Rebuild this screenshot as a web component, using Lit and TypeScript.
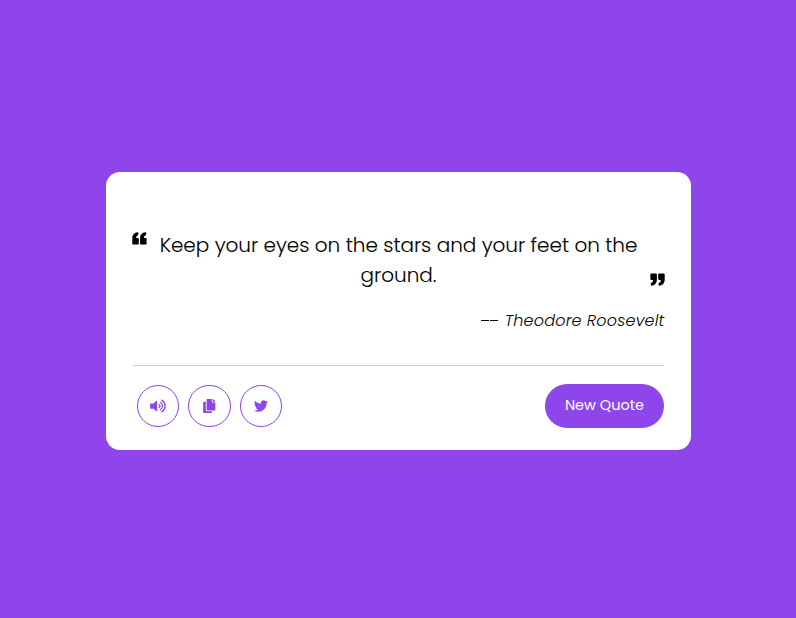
import { LitElement, html, css, svg } from "lit";
import { customElement } from "lit/decorators.js";

const quoteMark = svg`<path d="M5.6 .3Q6.4 .2 6.4 .9V2.6Q6.4 3.1 5.9 3.2C4.8 3.5 4.2 4.4 4.2 6H5.9Q6.8 6 6.8 6.9V11.7Q6.8 12.6 5.9 12.6H1.2Q.3 12.6 .3 11.7V6.4C.3 3 2.2 .6 5.6 .3ZM13.4 .3Q14.2 .2 14.2 .9V2.6Q14.2 3.1 13.7 3.2C12.6 3.5 12 4.4 12 6H13.7Q14.6 6 14.6 6.9V11.7Q14.6 12.6 13.7 12.6H9Q8.1 12.6 8.1 11.7V6.4C8.1 3 10 .6 13.4 .3Z"/>`;
const volume = svg`<path d="M215.03 71.05L126.06 160H24c-13.26 0-24 10.74-24 24v144c0 13.25 10.74 24 24 24h102.06l88.97 88.95c15.03 15.03 40.97 4.47 40.97-16.97V88.02c0-21.46-25.96-31.98-40.97-16.97z"/><path fill="none" stroke="currentColor" stroke-width="46" stroke-linecap="round" d="M328 201a63 63 0 0 1 0 110M378 121a160 160 0 0 1 0 270M429 41a256 256 0 0 1 0 430"/>`;
const copy = svg`<path d="M320 448v40c0 13.255-10.745 24-24 24H24c-13.255 0-24-10.745-24-24V120c0-13.255 10.745-24 24-24h72v296c0 30.879 25.121 56 56 56h168zm0-344V0H152c-13.255 0-24 10.745-24 24v368c0 13.255 10.745 24 24 24h272c13.255 0 24-10.745 24-24V128H344c-13.2 0-24-10.8-24-24zm120.971-31.029L375.029 7.029A24 24 0 0 0 358.059 0H352v96h96v-6.059a24 24 0 0 0-7.029-16.97z"/>`;
const twitter = svg`<path d="M459.37 151.716c.325 4.548.325 9.097.325 13.645 0 138.72-105.583 298.558-298.558 298.558-59.452 0-114.68-17.219-161.137-47.106 8.447.974 16.568 1.299 25.34 1.299 49.055 0 94.213-16.568 130.274-44.832-46.132-.975-84.792-31.188-98.112-72.772 6.498.974 12.995 1.624 19.818 1.624 9.421 0 18.843-1.3 27.614-3.573-48.081-9.747-84.143-51.98-84.143-102.985v-1.299c13.969 7.797 30.214 12.67 47.431 13.319-28.264-18.843-46.781-51.005-46.781-87.391 0-19.492 5.197-37.36 14.294-52.954 51.655 63.675 129.3 105.258 216.365 109.807-1.624-7.797-2.599-15.918-2.599-24.04 0-57.828 46.782-104.934 104.934-104.934 30.213 0 57.502 12.67 76.67 33.137 23.715-4.548 46.456-13.32 66.599-25.34-7.798 24.366-24.366 44.833-46.132 57.827 21.117-2.273 41.584-8.122 60.426-16.243-14.292 20.791-32.161 39.308-52.628 54.253z"/>`;

@customElement("app-root")
export class AppRoot extends LitElement {
  static styles = css`
    :host {
      display: flex;
      box-sizing: border-box;
      height: 100vh;
      padding: 172px 105px 168px 106px;
      background: #8e45eb;
      font-family: Poppins, Inter, sans-serif;
      color: #000;
    }
    * { box-sizing: border-box; }
    svg { display: block; fill: currentColor; }
    .card {
      flex: 1;
      display: flex;
      flex-direction: column;
      padding: 58px 27px 22px;
      border-radius: 14px;
      background: #fff;
    }
    .quote {
      display: flex;
      justify-content: space-between;
      height: 60px;
      margin: 0 -1px;
    }
    .mark { width: 15px; height: 13px; overflow: visible; }
    .open { margin-top: 2px; }
    .close { align-self: flex-end; margin-bottom: 4px; transform: rotate(180deg); }
    .text {
      margin: 0;
      font-size: 20px;
      line-height: 30px;
      font-weight: 300;
      letter-spacing: -0.04px;
      text-align: center;
      white-space: nowrap;
      -webkit-text-stroke: 0.08px currentColor;
    }
    .author {
      display: flex;
      justify-content: flex-end;
      align-items: center;
      gap: 7px;
      height: 24px;
      margin: 18px -0.5px 0 0;
      font-size: 16px;
      font-style: italic;
      font-weight: 300;
      letter-spacing: 0.19px;
      white-space: nowrap;
    }
    .dash {
      display: flex;
      gap: 1px;
      margin-top: 1px;
    }
    .dash::before,
    .dash::after {
      content: "";
      width: 8px;
      height: 1px;
      background: #000;
    }
    .footer {
      display: flex;
      justify-content: space-between;
      align-items: center;
      height: 63px;
      margin-top: 33px;
      padding-top: 18px;
      border-top: 1px solid #ccc;
    }
    .actions { display: flex; gap: 9.2px; padding-left: 4px; }
    .round {
      display: grid;
      place-items: center;
      width: 42.3px;
      height: 42.3px;
      padding: 0;
      border: 1px solid #8e45eb;
      border-radius: 50%;
      background: none;
      color: #8e45eb;
    }
    .round svg { height: 14px; }
    .new {
      width: 119px;
      height: 44px;
      padding: 0 0 2px;
      border: 0;
      border-radius: 22px;
      background: #8e45eb;
      color: #fff;
      font: 400 14.5px Poppins, Inter, sans-serif;
      white-space: nowrap;
    }
  `;

  render() {
    return html`
      <main class="card">
        <div class="quote">
          <svg class="mark open" viewBox="0 0 15 13">${quoteMark}</svg>
          <p class="text">Keep your eyes on the stars and your feet on the<br />ground.</p>
          <svg class="mark close" viewBox="0 0 15 13">${quoteMark}</svg>
        </div>
        <div class="author"><span class="dash"></span><span>Theodore Roosevelt</span></div>
        <div class="footer">
          <div class="actions">
            <button class="round" aria-label="Listen"><svg viewBox="0 0 576 512" width="16">${volume}</svg></button>
            <button class="round" aria-label="Copy"><svg viewBox="0 0 448 512" width="12.5">${copy}</svg></button>
            <button class="round" aria-label="Tweet"><svg viewBox="0 0 512 512" width="14">${twitter}</svg></button>
          </div>
          <button class="new">New Quote</button>
        </div>
      </main>
    `;
  }
}
